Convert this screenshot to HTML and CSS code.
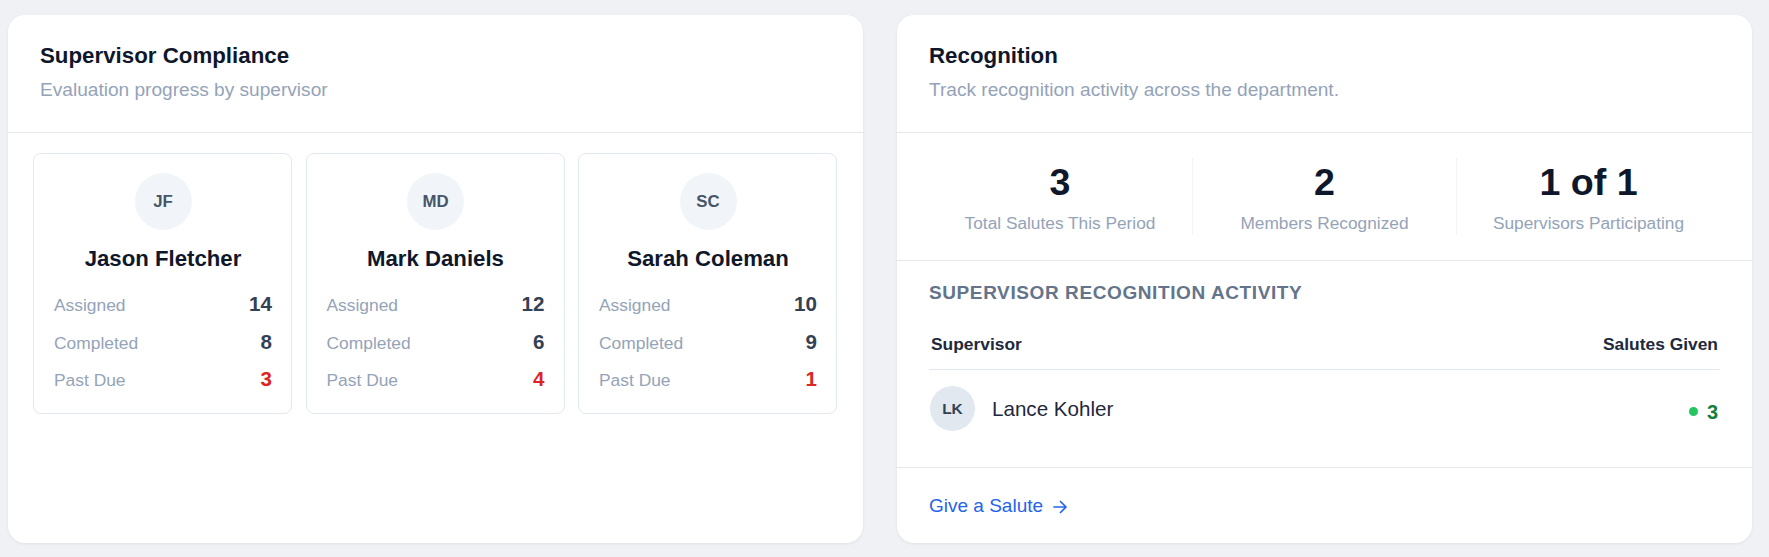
FILE: index.html
```html
<!DOCTYPE html>
<html lang="en">
<head>
<meta charset="utf-8">
<title>Dashboard</title>
<link rel="stylesheet" href="styles.css">
</head>
<body>
<main class="page">
  <section class="card">
    <header class="card-header">
      <h2 class="card-title">Supervisor Compliance</h2>
      <p class="card-subtitle">Evaluation progress by supervisor</p>
    </header>
    <div class="compliance-body">
      <div class="sup-card">
        <div class="sup-avatar">JF</div>
        <div class="sup-name">Jason Fletcher</div>
        <div class="sup-stats">
          <div class="sup-row"><span class="sup-label">Assigned</span><span class="sup-value">14</span></div>
          <div class="sup-row"><span class="sup-label">Completed</span><span class="sup-value">8</span></div>
          <div class="sup-row"><span class="sup-label">Past Due</span><span class="sup-value sup-value-danger">3</span></div>
        </div>
      </div>
      <div class="sup-card">
        <div class="sup-avatar">MD</div>
        <div class="sup-name">Mark Daniels</div>
        <div class="sup-stats">
          <div class="sup-row"><span class="sup-label">Assigned</span><span class="sup-value">12</span></div>
          <div class="sup-row"><span class="sup-label">Completed</span><span class="sup-value">6</span></div>
          <div class="sup-row"><span class="sup-label">Past Due</span><span class="sup-value sup-value-danger">4</span></div>
        </div>
      </div>
      <div class="sup-card">
        <div class="sup-avatar">SC</div>
        <div class="sup-name">Sarah Coleman</div>
        <div class="sup-stats">
          <div class="sup-row"><span class="sup-label">Assigned</span><span class="sup-value">10</span></div>
          <div class="sup-row"><span class="sup-label">Completed</span><span class="sup-value">9</span></div>
          <div class="sup-row"><span class="sup-label">Past Due</span><span class="sup-value sup-value-danger">1</span></div>
        </div>
      </div>
    </div>
  </section>

  <section class="card">
    <header class="card-header">
      <h2 class="card-title">Recognition</h2>
      <p class="card-subtitle">Track recognition activity across the department.</p>
    </header>
    <div class="stats-row">
      <div class="stat">
        <div class="stat-value">3</div>
        <div class="stat-label">Total Salutes This Period</div>
      </div>
      <div class="stat">
        <div class="stat-value">2</div>
        <div class="stat-label">Members Recognized</div>
      </div>
      <div class="stat">
        <div class="stat-value">1 of 1</div>
        <div class="stat-label">Supervisors Participating</div>
      </div>
    </div>
    <div class="activity">
      <h3 class="activity-title">Supervisor Recognition Activity</h3>
      <div class="activity-head">
        <span>Supervisor</span>
        <span>Salutes Given</span>
      </div>
      <div class="activity-row">
        <div class="activity-person">
          <div class="person-avatar">LK</div>
          <span class="person-name">Lance Kohler</span>
        </div>
        <div class="activity-count">
          <span class="count-dot"></span>
          <span class="count-value">3</span>
        </div>
      </div>
    </div>
    <footer class="card-footer">
      <a class="footer-link" href="#">Give a Salute
        <svg class="link-arrow" viewBox="0 0 16 16" width="16" height="16" aria-hidden="true">
          <path d="M2 8h12M8.5 2.5 14 8l-5.5 5.5" fill="none" stroke="currentColor" stroke-width="1.7" stroke-linecap="round" stroke-linejoin="round"/>
        </svg>
      </a>
    </footer>
  </section>
</main>
</body>
</html>
```

FILE: styles.css
```css
* {
  box-sizing: border-box;
}

html, body {
  margin: 0;
  padding: 0;
}

body {
  background: #eff1f5;
  font-family: "Liberation Sans", Arial, Helvetica, sans-serif;
  color: #0f172a;
}

.page {
  display: grid;
  grid-template-columns: 855px 855px;
  column-gap: 34px;
  padding: 15px 0 0 8px;
  height: 557px;
  align-items: start;
}

.card {
  background: #ffffff;
  border-radius: 17px;
  box-shadow: 0 1px 3px rgba(15, 23, 42, 0.07);
  height: 528px;
  display: flex;
  flex-direction: column;
  overflow: hidden;
}

.card-header {
  padding: 27px 32px 28px;
  border-bottom: 1px solid #e5e7eb;
}

.card-title {
  margin: 0;
  font-size: 22.3px;
  line-height: 28px;
  font-weight: 700;
  color: #0f172a;
}

.card-subtitle {
  margin: 6px 0 0;
  font-size: 19.1px;
  line-height: 28px;
  color: #94a3b8;
}

/* Compliance */
.compliance-body {
  padding: 20px 26px 20px 25px;
  display: grid;
  grid-template-columns: repeat(3, 1fr);
  column-gap: 13.5px;
  align-items: start;
}

.sup-card {
  border: 1px solid #e2e8f0;
  border-radius: 8px;
  padding: 19px 19px 20px 20px;
  display: flex;
  flex-direction: column;
  align-items: center;
}

.sup-avatar {
  width: 57px;
  height: 57px;
  border-radius: 50%;
  background: #f1f5f9;
  color: #475569;
  font-size: 16.8px;
  font-weight: 700;
  display: flex;
  align-items: center;
  justify-content: center;
}

.sup-name {
  margin-top: 15px;
  font-size: 22.2px;
  line-height: 28px;
  font-weight: 700;
  color: #0f172a;
}

.sup-stats {
  margin-top: 17px;
  align-self: stretch;
  display: flex;
  flex-direction: column;
  row-gap: 9.5px;
}

.sup-row {
  display: flex;
  justify-content: space-between;
  align-items: baseline;
  line-height: 28px;
  height: 28px;
}

.sup-label {
  font-size: 17.4px;
  color: #94a3b8;
}

.sup-value {
  font-size: 20.6px;
  font-weight: 700;
  color: #334155;
}

.sup-value-danger {
  color: #dc2626;
}

/* Recognition */
.stats-row {
  display: grid;
  grid-template-columns: repeat(3, 1fr);
  padding: 25px 32px 25px 31px;
  border-bottom: 1px solid #e5e7eb;
}

.stat {
  text-align: center;
  height: 77px;
}

.stat + .stat {
  border-left: 1px solid #f1f3f6;
}

.stat-value {
  font-size: 37.6px;
  line-height: 48px;
  font-weight: 700;
  color: #0f172a;
}

.stat-label {
  margin-top: 5px;
  font-size: 17.3px;
  line-height: 24px;
  color: #94a3b8;
}

.activity {
  padding: 20px 32px 20px;
  border-bottom: 1px solid #e5e7eb;
}

.activity-title {
  margin: 0 0 14px;
  font-size: 19px;
  line-height: 24px;
  font-weight: 700;
  letter-spacing: 0.6px;
  text-transform: uppercase;
  color: #64748b;
}

.activity-head {
  display: flex;
  justify-content: space-between;
  padding: 13px 2px 13px 2px;
  border-bottom: 1px solid #e2e8f0;
  font-size: 17.4px;
  line-height: 24px;
  font-weight: 700;
  color: #1e293b;
}

.activity-row {
  display: flex;
  justify-content: space-between;
  align-items: center;
  padding: 16px 2px 16px 1px;
}

.activity-person {
  display: flex;
  align-items: center;
  column-gap: 17px;
}

.person-avatar {
  width: 45px;
  height: 45px;
  border-radius: 50%;
  background: #e2e8f0;
  color: #334155;
  font-size: 15.5px;
  font-weight: 700;
  display: flex;
  align-items: center;
  justify-content: center;
}

.person-name {
  font-size: 20.6px;
  color: #1e293b;
}

.activity-count {
  display: flex;
  align-items: center;
  column-gap: 9px;
  padding-top: 6px;
}

.count-dot {
  width: 9px;
  height: 9px;
  border-radius: 50%;
  background: #22c55e;
}

.count-value {
  font-size: 20px;
  font-weight: 700;
  color: #15803d;
  line-height: 24px;
}

.card-footer {
  padding: 26px 32px 25px;
}

.footer-link {
  display: inline-flex;
  align-items: center;
  font-size: 19px;
  line-height: 24px;
  color: #2563eb;
  text-decoration: none;
}

.link-arrow {
  margin-left: 9px;
  margin-top: 1px;
}
```
